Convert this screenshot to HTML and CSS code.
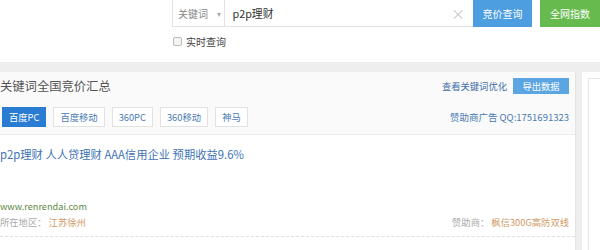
FILE: index.html
```html
<!DOCTYPE html>
<html lang="zh-CN">
<head>
<meta charset="utf-8">
<title>关键词全国竞价汇总</title>
<link rel="stylesheet" href="styles.css">
</head>
<body>
<div class="top">
  <div class="search">
    <div class="searchbar">
      <div class="select">关键词<span class="caret">▾</span></div>
      <div class="input"><span class="q">p2p理财</span><span class="clear">×</span></div>
      <div class="btn btn-blue">竞价查询</div>
      <div class="btn btn-green">全网指数</div>
    </div>
    <label class="realtime"><span class="cb"></span>实时查询</label>
  </div>
</div>
<div class="main">
  <div class="panel">
    <div class="panel-head">
      <div class="title">关键词全国竞价汇总</div>
      <div class="actions">
        <span class="opt">查看关键词优化</span>
        <span class="export">导出数据</span>
      </div>
    </div>
    <div class="tabs-row">
      <div class="tabs">
        <span class="tab active">百度PC</span>
        <span class="tab">百度移动</span>
        <span class="tab">360PC</span>
        <span class="tab">360移动</span>
        <span class="tab">神马</span>
      </div>
      <div class="ad">赞助商广告 QQ:1751691323</div>
    </div>
    <div class="result">
      <div class="r-title">p2p理财 人人贷理财 AAA信用企业 预期收益9.6%</div>
      <div class="r-url">www.renrendai.com</div>
      <div class="r-meta">
        <div><span class="lbl">所在地区：</span> <span class="val">江苏徐州</span></div>
        <div><span class="lbl">赞助商：</span> <span class="val">枫信300G高防双线</span></div>
      </div>
    </div>
  </div>
  <div class="side"><div class="side-box"></div></div>
</div>
</body>
</html>
```
FILE: styles.css
```css
* { box-sizing: border-box; }
html, body { margin: 0; padding: 0; }
body {
  width: 600px;
  height: 250px;
  overflow: hidden;
  font-family: "Noto Sans CJK SC", "Noto Sans", sans-serif;
  background: #eeeeee;
}
.top {
  height: 62px;
  background: #fff;
  padding-left: 172px;
}
.searchbar {
  display: flex;
  height: 27px;
}
.select {
  width: 55px;
  border: 1px solid #e2e2e2;
  border-top: 0;
  display: flex;
  align-items: center;
  padding-left: 5px;
  font-size: 10px;
  color: #888;
}
.caret {
  font-size: 8px;
  color: #aaa;
  margin-left: 9px;
}
.input {
  width: 255px;
  border-bottom: 1px solid #e2e2e2;
  display: flex;
  align-items: center;
  justify-content: space-between;
  padding-left: 7px;
  padding-right: 8px;
}
.q { font-size: 10.8px; color: #333; }
.clear { font-size: 14px; color: #bbb; font-weight: 300; }
.btn {
  height: 27px;
  display: flex;
  align-items: center;
  justify-content: center;
  font-size: 10px;
  color: #fff;
}
.btn-blue { width: 61px; background: #4c9ee0; }
.btn-green { width: 62px; margin-left: 8px; background: #67bb4e; }
.realtime {
  display: flex;
  align-items: center;
  margin-top: 7px;
  font-size: 10px;
  color: #444;
}
.cb {
  width: 9px;
  height: 9px;
  border: 1px solid #bbb;
  border-radius: 2px;
  background: #f4f4f4;
  margin-left: 1px;
  margin-right: 4px;
}
.main {
  display: flex;
  padding-top: 10px;
  height: 188px;
}
.panel {
  width: 576px;
  background: #fff;
  border-right: 1px solid #e4e4e4;
}
.panel-head {
  height: 27px;
  background: #fafafa;
  display: flex;
  align-items: center;
  justify-content: space-between;
  padding-right: 6px;
}
.title { font-size: 12.3px; color: #555; }
.actions { display: flex; align-items: center; }
.opt { font-size: 9.3px; color: #3d6fa8; margin-right: 6px; }
.export {
  width: 56px;
  height: 16px;
  background: #5ba5e3;
  color: #fff;
  font-size: 9.3px;
  display: flex;
  align-items: center;
  justify-content: center;
}
.tabs-row {
  height: 36px;
  background: #fafafa;
  border-bottom: 1px solid #ececec;
  display: flex;
  justify-content: space-between;
  padding: 8px 6px 0 2px;
}
.tabs { display: flex; gap: 7px; }
.tab {
  height: 20px;
  min-width: 33px;
  padding: 0 6px;
  border: 1px solid #e2e2e2;
  background: #fff;
  color: #4a7ab5;
  font-size: 9.3px;
  display: flex;
  align-items: center;
  justify-content: center;
}
.tab.active { background: #2a7bd2; border-color: #2a7bd2; color: #fff; }
.ad {
  font-size: 9.5px;
  color: #4a7ab5;
  line-height: 20px;
}
.result {
  padding: 12px 6px 7px 0;
  border-bottom: 1px dashed #e0e0e0;
}
.r-title {
  font-size: 11.3px;
  line-height: 14px;
  color: #3d72b4;
}
.r-url {
  margin-top: 38px;
  font-size: 9.2px;
  line-height: 14px;
  color: #5b8a3f;
}
.r-meta {
  margin-top: 2px;
  display: flex;
  justify-content: space-between;
  font-size: 9.3px;
  line-height: 14px;
}
.lbl { color: #aaa; }
.val { color: #d09a68; }
.side {
  flex: 1;
  margin-left: 6px;
  background: #fff;
  padding: 6px 0 0 6px;
}
.side-box {
  height: 100%;
  border-left: 1px solid #e6e6e6;
  border-top: 1px solid #e6e6e6;
}
```
